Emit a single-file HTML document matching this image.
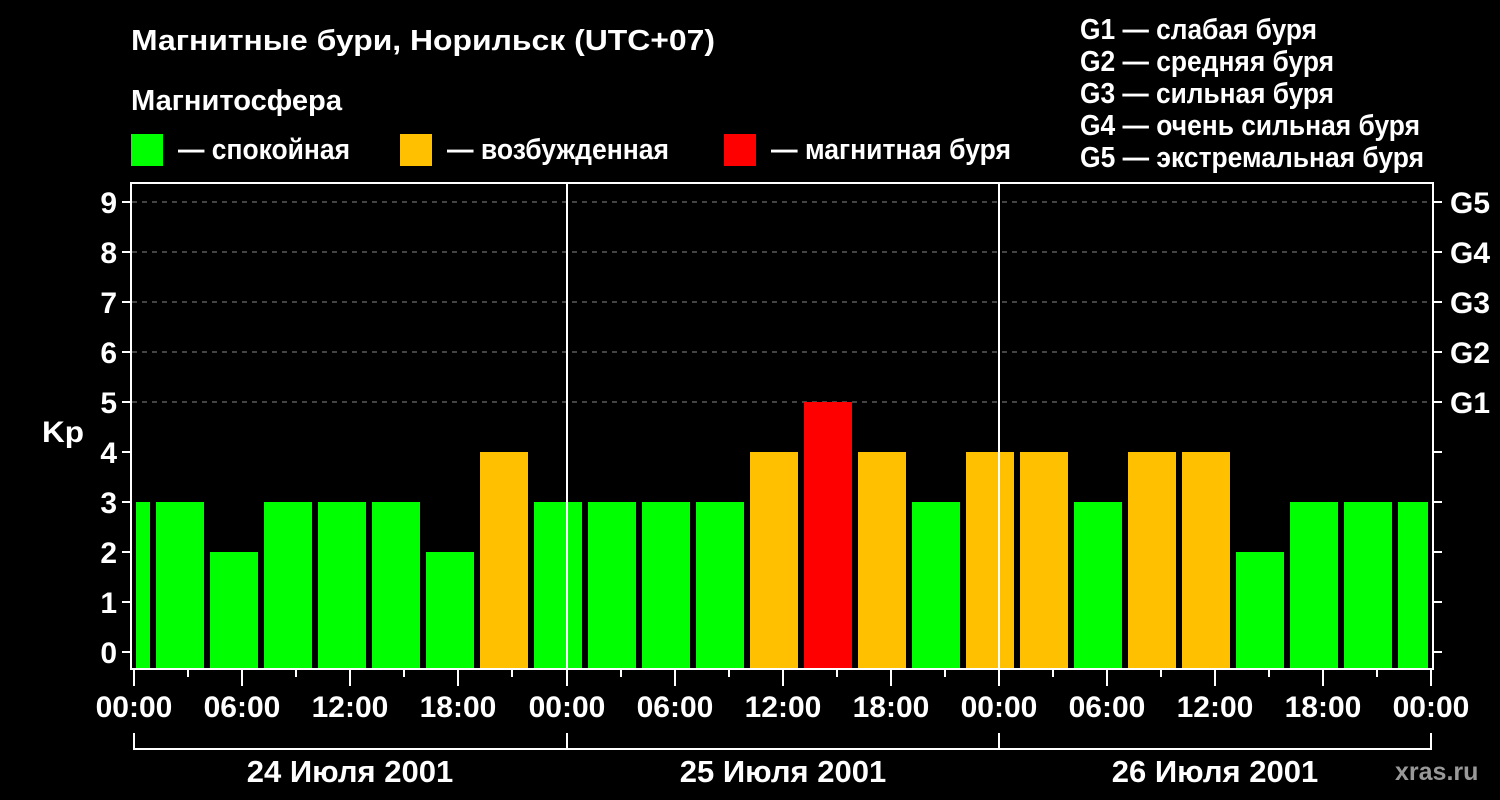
<!DOCTYPE html>
<html><head><meta charset="utf-8"><style>
html,body{margin:0;padding:0;background:#000;}
svg{display:block;font-family:"Liberation Sans",sans-serif;font-weight:bold;}
</style></head><body>
<svg width="1500" height="800" viewBox="0 0 1500 800" xmlns="http://www.w3.org/2000/svg">
<rect width="1500" height="800" fill="#000"/>
<g fill="#fff" font-size="29" lengthAdjust="spacingAndGlyphs">
<text x="131" y="50" textLength="584" lengthAdjust="spacingAndGlyphs">Магнитные бури, Норильск (UTC+07)</text>
<text x="131" y="110" textLength="211" lengthAdjust="spacingAndGlyphs">Магнитосфера</text>
<text x="178" y="159" textLength="172" lengthAdjust="spacingAndGlyphs">— спокойная</text>
<text x="447" y="159" textLength="222" lengthAdjust="spacingAndGlyphs">— возбужденная</text>
<text x="771" y="159" textLength="240" lengthAdjust="spacingAndGlyphs">— магнитная буря</text>
<text x="1080" y="39" textLength="237" lengthAdjust="spacingAndGlyphs">G1 — слабая буря</text>
<text x="1080" y="71" textLength="254" lengthAdjust="spacingAndGlyphs">G2 — средняя буря</text>
<text x="1080" y="103" textLength="254" lengthAdjust="spacingAndGlyphs">G3 — сильная буря</text>
<text x="1080" y="135" textLength="340" lengthAdjust="spacingAndGlyphs">G4 — очень сильная буря</text>
<text x="1080" y="167" textLength="344" lengthAdjust="spacingAndGlyphs">G5 — экстремальная буря</text>
</g>
<rect x="131" y="134" width="32" height="32" fill="#00ff00"/>
<rect x="400" y="134" width="32" height="32" fill="#ffc000"/>
<rect x="724" y="134" width="32" height="32" fill="#ff0000"/>
<g stroke="#888" stroke-width="1" stroke-dasharray="5,5">
<line x1="132" y1="202" x2="1432" y2="202"/><line x1="132" y1="252" x2="1432" y2="252"/>
<line x1="132" y1="302" x2="1432" y2="302"/><line x1="132" y1="352" x2="1432" y2="352"/>
<line x1="132" y1="402" x2="1432" y2="402"/>
</g>
<g>
<rect x="136" y="502" width="14" height="166" fill="#00ff00"/>
<rect x="156" y="502" width="48" height="166" fill="#00ff00"/>
<rect x="210" y="552" width="48" height="116" fill="#00ff00"/>
<rect x="264" y="502" width="48" height="166" fill="#00ff00"/>
<rect x="318" y="502" width="48" height="166" fill="#00ff00"/>
<rect x="372" y="502" width="48" height="166" fill="#00ff00"/>
<rect x="426" y="552" width="48" height="116" fill="#00ff00"/>
<rect x="480" y="452" width="48" height="216" fill="#ffc000"/>
<rect x="534" y="502" width="48" height="166" fill="#00ff00"/>
<rect x="588" y="502" width="48" height="166" fill="#00ff00"/>
<rect x="642" y="502" width="48" height="166" fill="#00ff00"/>
<rect x="696" y="502" width="48" height="166" fill="#00ff00"/>
<rect x="750" y="452" width="48" height="216" fill="#ffc000"/>
<rect x="804" y="402" width="48" height="266" fill="#ff0000"/>
<rect x="858" y="452" width="48" height="216" fill="#ffc000"/>
<rect x="912" y="502" width="48" height="166" fill="#00ff00"/>
<rect x="966" y="452" width="48" height="216" fill="#ffc000"/>
<rect x="1020" y="452" width="48" height="216" fill="#ffc000"/>
<rect x="1074" y="502" width="48" height="166" fill="#00ff00"/>
<rect x="1128" y="452" width="48" height="216" fill="#ffc000"/>
<rect x="1182" y="452" width="48" height="216" fill="#ffc000"/>
<rect x="1236" y="552" width="48" height="116" fill="#00ff00"/>
<rect x="1290" y="502" width="48" height="166" fill="#00ff00"/>
<rect x="1344" y="502" width="48" height="166" fill="#00ff00"/>
<rect x="1398" y="502" width="30" height="166" fill="#00ff00"/>
</g>
<g stroke="#fff" stroke-width="2" fill="none">
<rect x="131" y="183" width="1302" height="486"/>
<line x1="567" y1="183" x2="567" y2="668"/><line x1="999" y1="183" x2="999" y2="668"/>
<path d="M122 202h9M122 252h9M122 302h9M122 352h9M122 402h9M122 452h9M122 502h9M122 552h9M122 602h9M122 652h9"/>
<path d="M1433 202h9M1433 252h9M1433 302h9M1433 352h9M1433 402h9M1433 452h9M1433 502h9M1433 552h9M1433 602h9M1433 652h9"/>
<path d="M134 669v17M188 669v8M242 669v17M296 669v8M350 669v17M404 669v8M458 669v17M512 669v8M567 669v17M621 669v8M675 669v17M729 669v8M783 669v17M837 669v8M891 669v17M945 669v8M999 669v17M1053 669v8M1107 669v17M1161 669v8M1215 669v17M1269 669v8M1323 669v17M1377 669v8M1431 669v17"/>
<path d="M134 733v17M567 733v17M999 733v17M1431 733v17M134 749h1297"/>
</g>
<g fill="#fff" font-size="30" text-anchor="end">
<text x="117" y="213">9</text><text x="117" y="263">8</text><text x="117" y="313">7</text><text x="117" y="363">6</text><text x="117" y="413">5</text>
<text x="117" y="463">4</text><text x="117" y="513">3</text><text x="117" y="563">2</text><text x="117" y="613">1</text><text x="117" y="663">0</text>
</g>
<text x="42" y="442" fill="#fff" font-size="30" textLength="42" lengthAdjust="spacingAndGlyphs">Kp</text>
<g fill="#fff" font-size="30">
<text x="1450" y="213" textLength="40" lengthAdjust="spacingAndGlyphs">G5</text><text x="1450" y="263" textLength="40" lengthAdjust="spacingAndGlyphs">G4</text><text x="1450" y="313" textLength="40" lengthAdjust="spacingAndGlyphs">G3</text><text x="1450" y="363" textLength="40" lengthAdjust="spacingAndGlyphs">G2</text><text x="1450" y="413" textLength="40" lengthAdjust="spacingAndGlyphs">G1</text>
</g>
<g fill="#fff" font-size="30" text-anchor="middle">
<text x="134" y="717">00:00</text><text x="242" y="717">06:00</text><text x="350" y="717">12:00</text><text x="458" y="717">18:00</text>
<text x="567" y="717">00:00</text><text x="675" y="717">06:00</text><text x="783" y="717">12:00</text><text x="891" y="717">18:00</text>
<text x="999" y="717">00:00</text><text x="1107" y="717">06:00</text><text x="1215" y="717">12:00</text><text x="1323" y="717">18:00</text>
<text x="1431" y="717">00:00</text>
<text x="350" y="782" font-size="31">24 Июля 2001</text>
<text x="783" y="782" font-size="31">25 Июля 2001</text>
<text x="1215" y="782" font-size="31">26 Июля 2001</text>
</g>
<text x="1395" y="780" fill="#999" font-size="25">xras.ru</text>
</svg>
</body></html>
